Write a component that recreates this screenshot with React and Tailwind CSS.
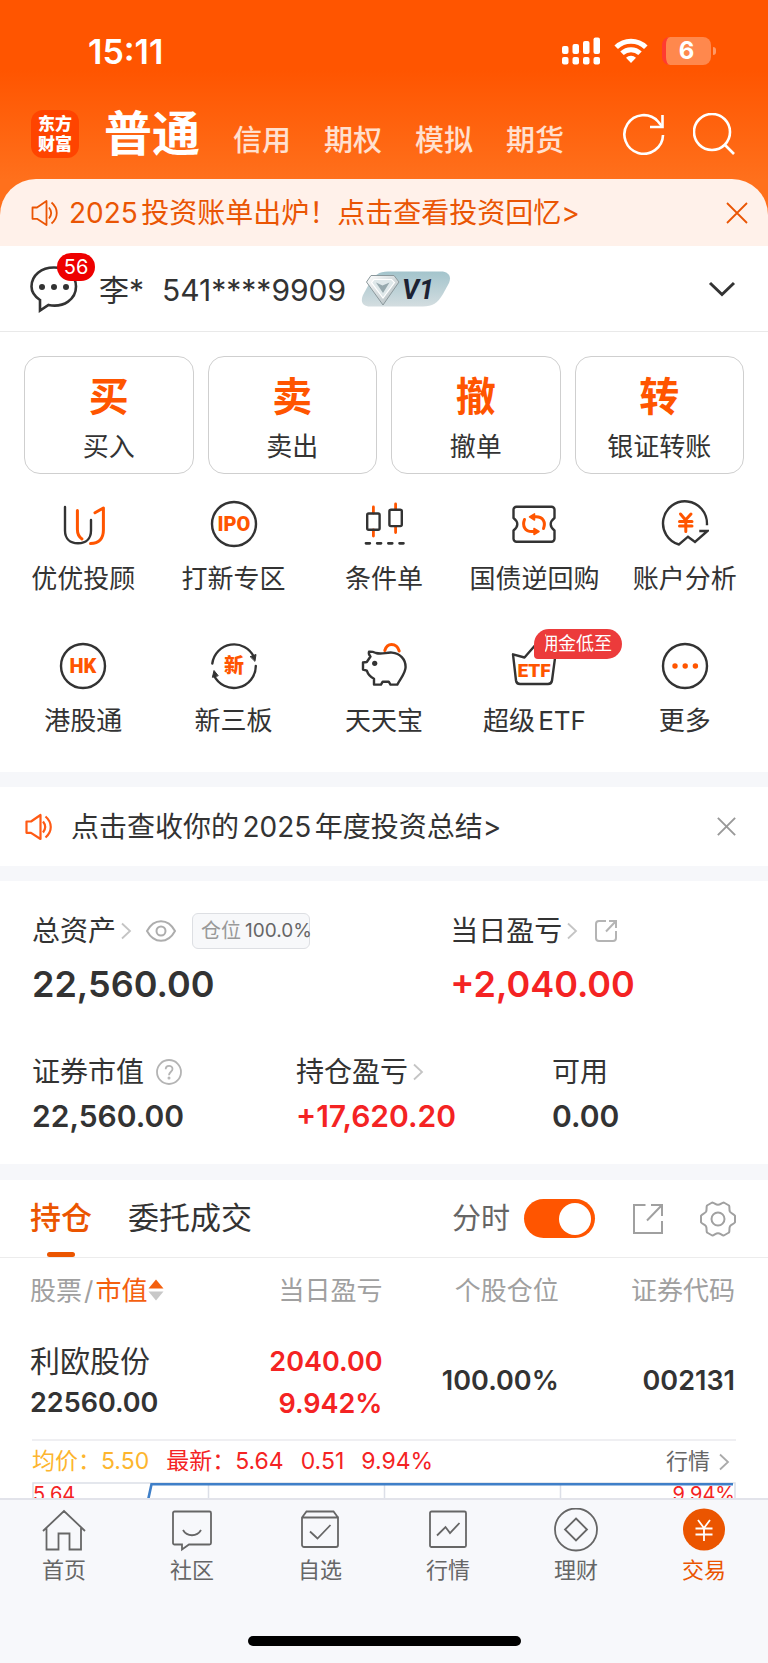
import { useState } from 'react'

const ORANGE = '#ff5500'
const INK = '#333333'

const accountTabs = ['信用', '期权', '模拟', '期货']

const tradeActions = [
  { glyph: '买', label: '买入' },
  { glyph: '卖', label: '卖出' },
  { glyph: '撤', label: '撤单' },
  { glyph: '转', label: '银证转账' },
]

/* ── Status bar icons ── */

function SignalIcon() {
  return (
    <svg width="38" height="28" viewBox="0 0 38 28" fill="#fff" aria-hidden="true">
      <rect x="0" y="9" width="6.5" height="8" rx="2" />
      <rect x="10.5" y="7" width="6.5" height="10" rx="2" />
      <rect x="21" y="4" width="6.5" height="13" rx="2" />
      <rect x="31.5" y="0.5" width="6.5" height="16.5" rx="2" />
      <rect x="0" y="20" width="6.5" height="7.5" rx="2" />
      <rect x="10.5" y="20" width="6.5" height="7.5" rx="2" />
      <rect x="21" y="20" width="6.5" height="7.5" rx="2" />
      <rect x="31.5" y="20" width="6.5" height="7.5" rx="2" />
    </svg>
  )
}

function WifiIcon() {
  return (
    <svg width="34" height="26" viewBox="0 0 34 26" fill="none" stroke="#fff" strokeWidth="5" aria-hidden="true">
      <path d="M2.2 9.3a21 21 0 0 1 29.6 0" />
      <path d="M8 15.3a13 13 0 0 1 18 0" />
      <path d="M17 25l-5-5.2a7.4 7.4 0 0 1 10 0z" fill="#fff" stroke="none" />
    </svg>
  )
}

function Battery() {
  return (
    <div className="flex items-center gap-0.5">
      <div className="flex h-7 w-[49px] items-center justify-center overflow-hidden rounded-lg border-l-4 border-[#ff3b30] bg-white/30 pr-1 text-2xl font-bold text-white">
        6
      </div>
      <div className="h-2 w-[3px] rounded-r-full bg-white/40" />
    </div>
  )
}

/* ── Shared icons ── */

function SpeakerIcon({ color, width }) {
  return (
    <svg width="28" height="28" viewBox="0 0 28 28" fill="none" stroke={color} strokeWidth={width} strokeLinejoin="round" aria-hidden="true">
      <path d="M1.5 8.5H6L15.5 2V26L6 19.8H1.5z" />
      <path d="M18 8.5c2.8 3.5 2.8 7.5 0 11" />
      <path d="M20.5 3.5c7 6 7 15 0 21" />
    </svg>
  )
}

function CloseIcon({ size, color, width }) {
  return (
    <svg width={size} height={size} viewBox="0 0 22 22" stroke={color} strokeWidth={width} aria-hidden="true">
      <path d="M1 1L21 21M21 1L1 21" />
    </svg>
  )
}

function Chevron({ color = '#c4c4c4' }) {
  return (
    <svg width="12" height="18" viewBox="0 0 12 18" fill="none" stroke={color} strokeWidth="1.8" aria-hidden="true">
      <path d="M2 1.5L10 9L2 16.5" />
    </svg>
  )
}

/* ── Shortcut icons, all on a 48 grid ── */

function GridIcon({ children }) {
  return (
    <svg width="48" height="48" viewBox="0 0 48 48" fill="none" stroke={INK} strokeWidth="2.4" strokeLinecap="round" strokeLinejoin="round" aria-hidden="true">
      {children}
    </svg>
  )
}

function IconText({ y, size = 20, children }) {
  return (
    <text x="24" y={y} textAnchor="middle" fontSize={size} fill={ORANGE} stroke="none" className="font-[Roboto,'Noto_Sans_CJK_SC',sans-serif] font-black">
      {children}
    </text>
  )
}

const AdvisorIcon = () => (
  <GridIcon>
    <path d="M6 7V30.5C6 38.5 11 43.3 19 43.3S32 38.5 32 30.5V20" />
    <g stroke={ORANGE} strokeWidth="3">
      <path d="M18.4 10.5V29.5C18.4 34 20 37 23 39" />
      <path d="M36 12.7L44.4 8V30C44.4 38.5 40 43.5 31.5 43.5" />
    </g>
  </GridIcon>
)

const IpoIcon = () => (
  <GridIcon>
    <circle cx="24" cy="24" r="22" />
    <IconText y="31">IPO</IconText>
  </GridIcon>
)

const CandleIcon = () => (
  <GridIcon>
    <g stroke={ORANGE} strokeWidth="2.8">
      <path d="M13.4 7V13M13.4 30V36M35.6 4V9M35.6 27V32.5" />
    </g>
    <rect x="7.2" y="13.5" width="12.4" height="16.2" rx="1.5" />
    <rect x="29.4" y="9.7" width="12.4" height="16.4" rx="1.5" />
    <path d="M6 43.3h3.8M17.2 43.3h3.8M28.4 43.3h3.8M39.6 43.3h3.8" strokeWidth="2.8" />
  </GridIcon>
)

const RepoIcon = () => (
  <GridIcon>
    <path d="M6.5 6.7H41.5a3 3 0 0 1 3 3V18C42.5 19.5 40.7 21 40.7 24.2S42.5 29 44.5 30.5V38.7a3 3 0 0 1-3 3H6.5a3 3 0 0 1-3-3V30.5C5.5 29 7.3 27.4 7.3 24.2S5.5 19.5 3.5 18V9.7a3 3 0 0 1 3-3z" />
    <g stroke={ORANGE} strokeWidth="3">
      <path d="M14.5 19.5C12 26 15 31.5 22 31.5H26" />
      <path d="M33.5 28.5C36 22 33 16.8 26 16.8H22" />
      <path d="M24.5 13.8V20L19.5 16.8zM24 28.5V34.5L29 31.5z" fill={ORANGE} strokeWidth="1.5" />
    </g>
  </GridIcon>
)

const AnalysisIcon = () => (
  <GridIcon>
    <path d="M46 24A22 22 0 1 0 18 44.5L27 36.7L34 42L46.5 31H39.5" strokeLinecap="square" strokeLinejoin="miter" />
    <path d="M19.5 14L24.5 20L30 14M18.5 21.5H31M18.5 26H31M24.8 20V31.5" stroke={ORANGE} strokeWidth="3" />
  </GridIcon>
)

const HkIcon = () => (
  <GridIcon>
    <circle cx="24" cy="24" r="22" />
    <IconText y="31">HK</IconText>
  </GridIcon>
)

const NewBoardIcon = () => (
  <GridIcon>
    <path d="M2.3 21.5A22 22 0 0 1 44 15" />
    <path d="M45.8 24A22 22 0 0 1 4 33.5" />
    <path d="M40.5 14.5L46 12.5L45 19zM2.5 35L4 28.5L8 33.5z" fill={INK} strokeWidth="1" />
    <IconText y="31">新</IconText>
  </GridIcon>
)

const PiggyIcon = () => (
  <GridIcon>
    <path d="M24.8 8.5C26 4.5 28.5 2.5 31.5 2.5C35.5 2.5 38 5 39.2 9" stroke={ORANGE} strokeWidth="3" />
    <path d="M16 11C22 12.6 26 10.2 32 10.6C40 11.5 45.6 17 45.6 25C45.6 31 41 35.5 37.3 42.6H30.5L28.7 39.7H22.7L21 42.6H14V36.8C10.5 35 8 32.5 6.8 28.7L3 27.5V20.5L6.8 20L10.5 14.5C9 13 8.5 11.5 9 9.7C11.5 9.5 13.5 10 16 11z" />
    <circle cx="14.7" cy="21.3" r="2.6" fill={INK} stroke="none" />
  </GridIcon>
)

const EtfIcon = () => (
  <GridIcon>
    <path d="M3 12.3L6 38.5Q6.5 42 10 42H38Q41.5 42 42 38.5L45.5 12.3L34.5 15.5L24.5 4L14.5 15.5z" />
    <IconText y="35" size={19}>ETF</IconText>
  </GridIcon>
)

const MoreIcon = () => (
  <GridIcon>
    <circle cx="24" cy="24" r="22" />
    <g fill={ORANGE} stroke="none">
      <circle cx="14" cy="24" r="2.7" />
      <circle cx="24.2" cy="24" r="2.7" />
      <circle cx="34.4" cy="24" r="2.7" />
    </g>
  </GridIcon>
)

const shortcuts = [
  { label: '优优投顾', Icon: AdvisorIcon },
  { label: '打新专区', Icon: IpoIcon },
  { label: '条件单', Icon: CandleIcon },
  { label: '国债逆回购', Icon: RepoIcon },
  { label: '账户分析', Icon: AnalysisIcon },
  { label: '港股通', Icon: HkIcon },
  { label: '新三板', Icon: NewBoardIcon },
  { label: '天天宝', Icon: PiggyIcon },
  { label: '超级ETF', Icon: EtfIcon, badge: '佣金低至' },
  { label: '更多', Icon: MoreIcon },
]

/* ── Bottom navigation icons, on a 44 grid ── */

const navItems = [
  {
    label: '首页',
    icon: <path d="M1 23L22 3L43 23M4.5 20V41.5H16.5V25.5H27.5V41.5H39V20" />,
  },
  {
    label: '社区',
    icon: <path d="M4.5 3.5H39.5a1.5 1.5 0 0 1 1.5 1.5V35a1.5 1.5 0 0 1-1.5 1.5H19L12 41.5V36.5H4.5A1.5 1.5 0 0 1 3 35V5a1.5 1.5 0 0 1 1.5-1.5zM13 22C17 29 27 29 31 22" />,
  },
  {
    label: '自选',
    icon: <path d="M4 9.5H40V37a2 2 0 0 1-2 2H6a2 2 0 0 1-2-2V9.5L8.5 3.5H35.5L40 9.5M12 23.5L19.5 30.5L32.5 17" />,
  },
  {
    label: '行情',
    icon: <path d="M5.5 3.5H38.5a1.5 1.5 0 0 1 1.5 1.5V37.5a1.5 1.5 0 0 1-1.5 1.5H5.5A1.5 1.5 0 0 1 4 37.5V5a1.5 1.5 0 0 1 1.5-1.5zM11 27.5L19.5 19L24 25L33.5 15" />,
  },
  {
    label: '理财',
    icon: (
      <>
        <circle cx="22" cy="21.5" r="21" />
        <path d="M22 10.5L33 21.5L22 32.5L11 21.5z" />
      </>
    ),
  },
  {
    label: '交易',
    active: true,
    icon: (
      <>
        <circle cx="22" cy="21.5" r="21" fill="#eb5500" stroke="none" />
        <path d="M16 12L22 20L28 12M13.5 20.5H30.5M13.5 26.5H30.5M22 20V33" stroke="#fff" />
      </>
    ),
  },
]

/* ── Sections ── */

function Header() {
  return (
    <header className="bg-[linear-gradient(#ff5500_70px,#ff701c_180px)]">
      {/* Status bar */}
      <div className="flex h-24 items-center justify-between pt-1.5 pr-13 pl-22 text-white">
        <span className="pt-0.5 text-[34px] leading-10 font-semibold">15:11</span>
        <div className="flex items-center gap-3.5">
          <SignalIcon />
          <WifiIcon />
          <Battery />
        </div>
      </div>

      {/* Account type tabs */}
      <div className="flex h-[83px] items-center pr-[33px] pb-2 pl-[31px]">
        <div className="flex h-12 w-12 flex-col items-center justify-center rounded-xl bg-[#ff4400] text-[17px] leading-5 font-black text-white">
          <span>东方</span>
          <span>财富</span>
        </div>
        <nav className="ml-[25px] flex flex-1 items-baseline gap-[33px]">
          <a href="#normal" className="text-5xl leading-[60px] font-bold text-white">普通</a>
          {accountTabs.map((tab) => (
            <a key={tab} href={`#${tab}`} className="text-[29px] font-medium text-white/80">{tab}</a>
          ))}
        </nav>
        <div className="flex items-center gap-7">
          <button type="button" aria-label="刷新">
            <svg width="42" height="42" viewBox="0 0 42 42" fill="none" stroke="#fff" strokeWidth="2.6">
              <path d="M40 22A19.3 19.3 0 1 1 35 8.5L39 13.5" />
              <path d="M39.5 2V14H27" />
            </svg>
          </button>
          <button type="button" aria-label="搜索">
            <svg width="42" height="42" viewBox="0 0 42 42" fill="none" stroke="#fff" strokeWidth="2.6">
              <circle cx="19" cy="19" r="18" />
              <path d="M31.5 31.5L41 41" />
            </svg>
          </button>
        </div>
      </div>

      {/* Announcement */}
      <div className="flex h-[67px] items-center rounded-t-[36px] bg-[#fff1ea] pr-5 pl-[31px] text-[28px] text-[#ea5504]">
        <SpeakerIcon color="#ea5504" width="1.8" />
        <a href="#bill" className="ml-2.5 flex-1 whitespace-nowrap">2025投资账单出炉！点击查看投资回忆&gt;</a>
        <button type="button" aria-label="关闭公告">
          <CloseIcon size={22} color="#ea5504" width="1.8" />
        </button>
      </div>
    </header>
  )
}

function AccountBar() {
  return (
    <div className="flex h-[86px] items-center border-b border-[#e9e9e9] pr-8 pl-[30px] text-[30px]">
      <button type="button" aria-label="消息" className="relative">
        <svg width="48" height="48" viewBox="0 0 48 48" fill="none" stroke={INK} strokeWidth="2.6">
          <path d="M10 45.5V35C4 31 1.5 26.5 1.5 21.5C1.5 10 11.5 2.5 24 2.5S46 10.5 46 21.5C46 34 34 43 18.5 40z" />
          <g fill={INK} stroke="none">
            <circle cx="12" cy="22" r="3" />
            <circle cx="24" cy="22" r="3" />
            <circle cx="36" cy="22" r="3" />
          </g>
        </svg>
        <span className="absolute -top-3 left-[27px] flex h-7 w-[38px] items-center justify-center rounded-full bg-[#ee0000] text-xl text-white">56</span>
      </button>
      <div className="ml-[21px] flex gap-[18px] pt-1">
        <span>李*</span>
        <span>541****9909</span>
      </div>
      <svg width="90" height="36" viewBox="0 0 90 36" className="ml-[15px]" role="img" aria-label="V1">
        <defs>
          <linearGradient id="vip" x1="0" y1="0" x2="0" y2="1">
            <stop offset="0" stopColor="#a3c4cc" />
            <stop offset="1" stopColor="#d3dde0" />
          </linearGradient>
          <linearGradient id="gem" x1="0" y1="0" x2="1" y2="1">
            <stop offset="0" stopColor="#ffffff" />
            <stop offset="1" stopColor="#a9b6ba" />
          </linearGradient>
        </defs>
        <path d="M27 0.5H80C87 0.5 91 5 88 12L82 23C77 32 71 35.5 62 35.5H9C2 35.5 -1 31 2 24L8 13C13 4 18 0.5 27 0.5z" fill="url(#vip)" />
        <path d="M10 4.5H33L38 11L22 34L5.5 11z" fill="url(#gem)" stroke="#8b989c" strokeWidth="1" />
        <path d="M13 8.5H30.5L33.5 11.5L22 27L10.5 11.5z" fill="#dfe8ea" stroke="#fff" strokeWidth="1.2" />
        <path d="M15 11.5L21.5 14.5L28.5 11.5L22 22z" fill="#97a9ae" />
        <text x="41" y="28" fontSize="27" fill="#1c2233" className="font-[Roboto,sans-serif] font-bold italic">V1</text>
      </svg>
      <button type="button" aria-label="切换账户" className="ml-auto">
        <svg width="28" height="18" viewBox="0 0 28 18" fill="none" stroke={INK} strokeWidth="3">
          <path d="M2 3L14 14.5L26 3" />
        </svg>
      </button>
    </div>
  )
}

function Shortcuts() {
  return (
    <section className="pt-6 pb-[30px]">
      <div className="grid grid-cols-4 gap-3.5 px-6">
        {tradeActions.map(({ glyph, label }) => (
          <button key={label} type="button" className="flex h-[118px] flex-col items-center justify-center rounded-2xl border border-[#cfcfcf] pt-3">
            <span className="text-[40px] leading-[52px] font-bold text-[#ff5500]">{glyph}</span>
            <span className="text-[26px] leading-[48px]">{label}</span>
          </button>
        ))}
      </div>
      <div className="mt-[26px] grid grid-cols-5 gap-y-[42px] px-2">
        {shortcuts.map(({ label, Icon, badge }) => (
          <button key={label} type="button" className="relative flex flex-col items-center gap-2.5">
            <Icon />
            <span className="text-[26px] leading-[42px] whitespace-nowrap">{label}</span>
            {badge && (
              <span className="absolute -top-[13px] left-1/2 flex h-[30px] w-[88px] items-center justify-center rounded-[15px] rounded-bl-sm bg-[#ec3b3b]">
                <span className="flex w-[67px] justify-end overflow-hidden text-lg whitespace-nowrap text-white">{badge}</span>
              </span>
            )}
          </button>
        ))}
      </div>
    </section>
  )
}

function Notice() {
  return (
    <section className="border-y-[15px] border-[#f6f7fa]">
      <div className="flex h-[79px] items-center pr-8 pl-[25px] text-[28px]">
        <SpeakerIcon color="#ff5a14" width="2.2" />
        <a href="#summary" className="ml-[18px] flex-1 whitespace-nowrap">点击查收你的2025年度投资总结&gt;</a>
        <button type="button" aria-label="关闭通知">
          <CloseIcon size={19} color="#999999" width="2.2" />
        </button>
      </div>
    </section>
  )
}

function Assets() {
  return (
    <section className="px-8 pt-[26px] pb-[26px] text-[28px]">
      <div className="grid grid-cols-[60fr_41fr]">
        <div>
          <div className="flex h-12 items-center">
            <span>总资产</span>
            <span className="ml-1"><Chevron /></span>
            <button type="button" aria-label="隐藏金额" className="ml-3.5">
              <svg width="30" height="22" viewBox="0 0 30 22" fill="none" stroke="#adadad" strokeWidth="2">
                <path d="M1 11C8 -2 22 -2 29 11C22 24 8 24 1 11z" />
                <circle cx="15" cy="11" r="4.5" />
              </svg>
            </button>
            <span className="ml-4 flex h-9 w-[118px] items-center gap-1 rounded-md border border-[#dddfe3] bg-[#f7f8fa] pl-2 text-xl whitespace-nowrap text-[#666666]">
              <span className="text-[#999999]">仓位</span>
              <span className="text-[19px]">100.0%</span>
            </span>
          </div>
          <p className="text-4xl leading-[58px] font-semibold">22,560.00</p>
        </div>
        <div>
          <div className="flex h-12 items-center">
            <span>当日盈亏</span>
            <span className="ml-1"><Chevron /></span>
            <button type="button" aria-label="分享盈亏" className="ml-4">
              <svg width="24" height="24" viewBox="0 0 24 24" fill="none" stroke="#b4b4b4" strokeWidth="2">
                <path d="M12 2H5a3 3 0 0 0-3 3V19a3 3 0 0 0 3 3H19a3 3 0 0 0 3-3V12M15 2H22V9M22 2L12 12.5" />
              </svg>
            </button>
          </div>
          <p className="text-4xl leading-[58px] font-semibold text-[#f42323]">+2,040.00</p>
        </div>
      </div>

      <div className="mt-[37px] grid grid-cols-[33fr_32fr_23fr]">
        <div>
          <div className="flex h-11 items-center gap-3">
            <span>证券市值</span>
            <button type="button" aria-label="说明">
              <svg width="26" height="26" viewBox="0 0 26 26" fill="none" stroke="#b4b4b4" strokeWidth="1.8">
                <circle cx="13" cy="13" r="12" />
                <path d="M9.7 10.3C9.7 5.5 16.5 5.8 16.5 10C16.5 12.8 13 12.8 13 16.3" />
                <circle cx="13" cy="19" r="0.6" />
              </svg>
            </button>
          </div>
          <p className="text-3xl leading-[44px] font-semibold">22,560.00</p>
        </div>
        <div>
          <div className="flex h-11 items-center gap-1">
            <span>持仓盈亏</span>
            <Chevron />
          </div>
          <p className="text-3xl leading-[44px] font-semibold text-[#f42323]">+17,620.20</p>
        </div>
        <div>
          <div className="flex h-11 items-center">可用</div>
          <p className="text-3xl leading-[44px] font-semibold">0.00</p>
        </div>
      </div>
    </section>
  )
}

function HoldingsTabs() {
  const [intraday, setIntraday] = useState(true)

  return (
    <div className="flex h-[94px] items-stretch border-t-[16px] border-b border-t-[#f6f7fa] border-b-[#ececec] pr-8 pl-[30px]">
      <button type="button" className="relative text-[31px] font-medium text-[#eb5500]">
        持仓
        <span className="absolute bottom-0 left-1/2 h-[5px] w-7 -translate-x-1/2 rounded-sm bg-[#eb5500]" />
      </button>
      <button type="button" className="ml-9 text-[31px]">委托成交</button>
      <label className="ml-auto flex items-center gap-3.5 text-[29px] text-[#666666]">
        分时
        <input
          type="checkbox"
          role="switch"
          checked={intraday}
          onChange={(e) => setIntraday(e.target.checked)}
          className="peer sr-only"
        />
        <span className="flex h-[39px] w-[71px] items-center justify-start rounded-full bg-[#cccccc] px-1 peer-checked:justify-end peer-checked:bg-[#ff5500]">
          <span className="h-8 w-8 rounded-full bg-white" />
        </span>
      </label>
      <button type="button" aria-label="分享持仓" className="ml-[37px]">
        <svg width="32" height="32" viewBox="0 0 32 32" fill="none" stroke="#a0a0a0" strokeWidth="2">
          <path d="M13.5 2H2V30H30V18M19 2H30V13M30 2L15 17.5" />
        </svg>
      </button>
      <button type="button" aria-label="设置" className="ml-9">
        <svg width="36" height="36" viewBox="0 0 36 36" fill="none" stroke="#a0a0a0" strokeWidth="2" strokeLinejoin="round">
          <path d="M12.2 1.5C14.5 1.8 15.5 3.8 18 3.8S21.5 1.8 23.8 1.5L29 4.5C30 6.8 28.8 8.5 30 10.8C31.3 12.7 33.5 12.5 35 14.8V21.2C33.5 23.5 31.3 23.3 30 25.2C28.8 27.5 30 29.2 29 31.5L23.8 34.5C21.5 34.2 20.5 32.2 18 32.2S14.5 34.2 12.2 34.5L7 31.5C6 29.2 7.2 27.5 6 25.2C4.7 23.3 2.5 23.5 1 21.2V14.8C2.5 12.5 4.7 12.7 6 10.8C7.2 8.5 6 6.8 7 4.5z" />
          <circle cx="18" cy="18" r="6.5" />
        </svg>
      </button>
    </div>
  )
}

function HoldingsTable() {
  return (
    <div className="pr-[33px] pl-[30px]">
      <table className="w-full table-fixed text-right text-[27px] font-semibold">
        <thead>
          <tr className="h-16 text-[26px] whitespace-nowrap text-[#a0a0a0]">
            <th className="text-left font-normal">
              <button type="button" className="flex items-center">
                股票<span className="mx-0.5">/</span>
                <span className="text-[#f4600f]">市值</span>
                <svg width="16" height="22" viewBox="0 0 16 22" className="ml-px" aria-hidden="true">
                  <path d="M8 0.5L15.5 9.5H0.5z" fill="#f4600f" />
                  <path d="M0.5 12.5H15.5L8 21.5z" fill="#c8c8c8" />
                </svg>
              </button>
            </th>
            <th className="font-normal">当日盈亏</th>
            <th className="font-normal">个股仓位</th>
            <th className="font-normal">证券代码</th>
          </tr>
        </thead>
        <tbody>
          <tr className="h-[117px] leading-[42px]">
            <td className="pt-0.5 text-left">
              <div className="text-[30px] font-normal">利欧股份</div>
              <div>22560.00</div>
            </td>
            <td className="pt-1 text-[#f42323]">
              <div>2040.00</div>
              <div>9.942%</div>
            </td>
            <td>100.00%</td>
            <td>002131</td>
          </tr>
        </tbody>
      </table>
    </div>
  )
}

function IntradayChart() {
  return (
    <section className="px-8">
      <div className="flex h-[43px] items-center border-t-2 border-[#efeff2] text-[23px] text-[#f42323]">
        <span className="text-[#fdb52e]">均价：5.50</span>
        <span className="ml-[17px]">最新：5.64</span>
        <span className="ml-[17px]">0.51</span>
        <span className="ml-[17px]">9.94%</span>
        <a href="#quote" className="ml-auto flex items-center gap-2 pr-1.5 text-[22px] text-[#666666]">
          行情
          <Chevron color="#aaaaaa" />
        </a>
      </div>
      <div className="relative">
        <svg viewBox="0 0 704 260" className="block w-full" fill="none" role="img" aria-label="分时走势">
          <path d="M1 260V1H703V260M176.5 1V260M352.5 1V260M528.5 1V260" stroke="#dcdfe8" strokeWidth="1.5" />
          <path d="M110 46L119.5 2.2H701" stroke="#3f7fc8" strokeWidth="2.6" />
        </svg>
        <div className="absolute inset-x-0 top-0 flex justify-between px-px text-xl leading-6 text-[#f42323]">
          <span>5.64</span>
          <span>9.94%</span>
        </div>
      </div>
    </section>
  )
}

function BottomNav() {
  return (
    <footer className="border-t-2 border-[#e2e3ea] bg-[#f7f8fb] pb-[17px]">
      <nav className="grid grid-cols-6 pt-2">
        {navItems.map(({ label, icon, active }) => (
          <a
            key={label}
            href={`#${label}`}
            className={`flex flex-col items-center gap-0.5 text-[22px] leading-8 ${active ? 'text-[#eb5500]' : 'text-[#666666]'}`}
          >
            <svg width="44" height="44" viewBox="0 0 44 44" fill="none" stroke="currentColor" strokeWidth="1.8" aria-hidden="true">
              {icon}
            </svg>
            {label}
          </a>
        ))}
      </nav>
      <div className="mx-auto mt-[50px] h-2.5 w-[273px] rounded-full bg-black" />
    </footer>
  )
}

export default function App() {
  return (
    <div className="flex h-screen flex-col bg-white font-[Inter,'Noto_Sans_CJK_SC',sans-serif] text-[#333333] [text-autospace:normal]">
      <main className="min-h-0 flex-1 overflow-y-auto [scrollbar-width:none]">
        <Header />
        <AccountBar />
        <Shortcuts />
        <Notice />
        <Assets />
        <HoldingsTabs />
        <HoldingsTable />
        <IntradayChart />
      </main>
      <BottomNav />
    </div>
  )
}
